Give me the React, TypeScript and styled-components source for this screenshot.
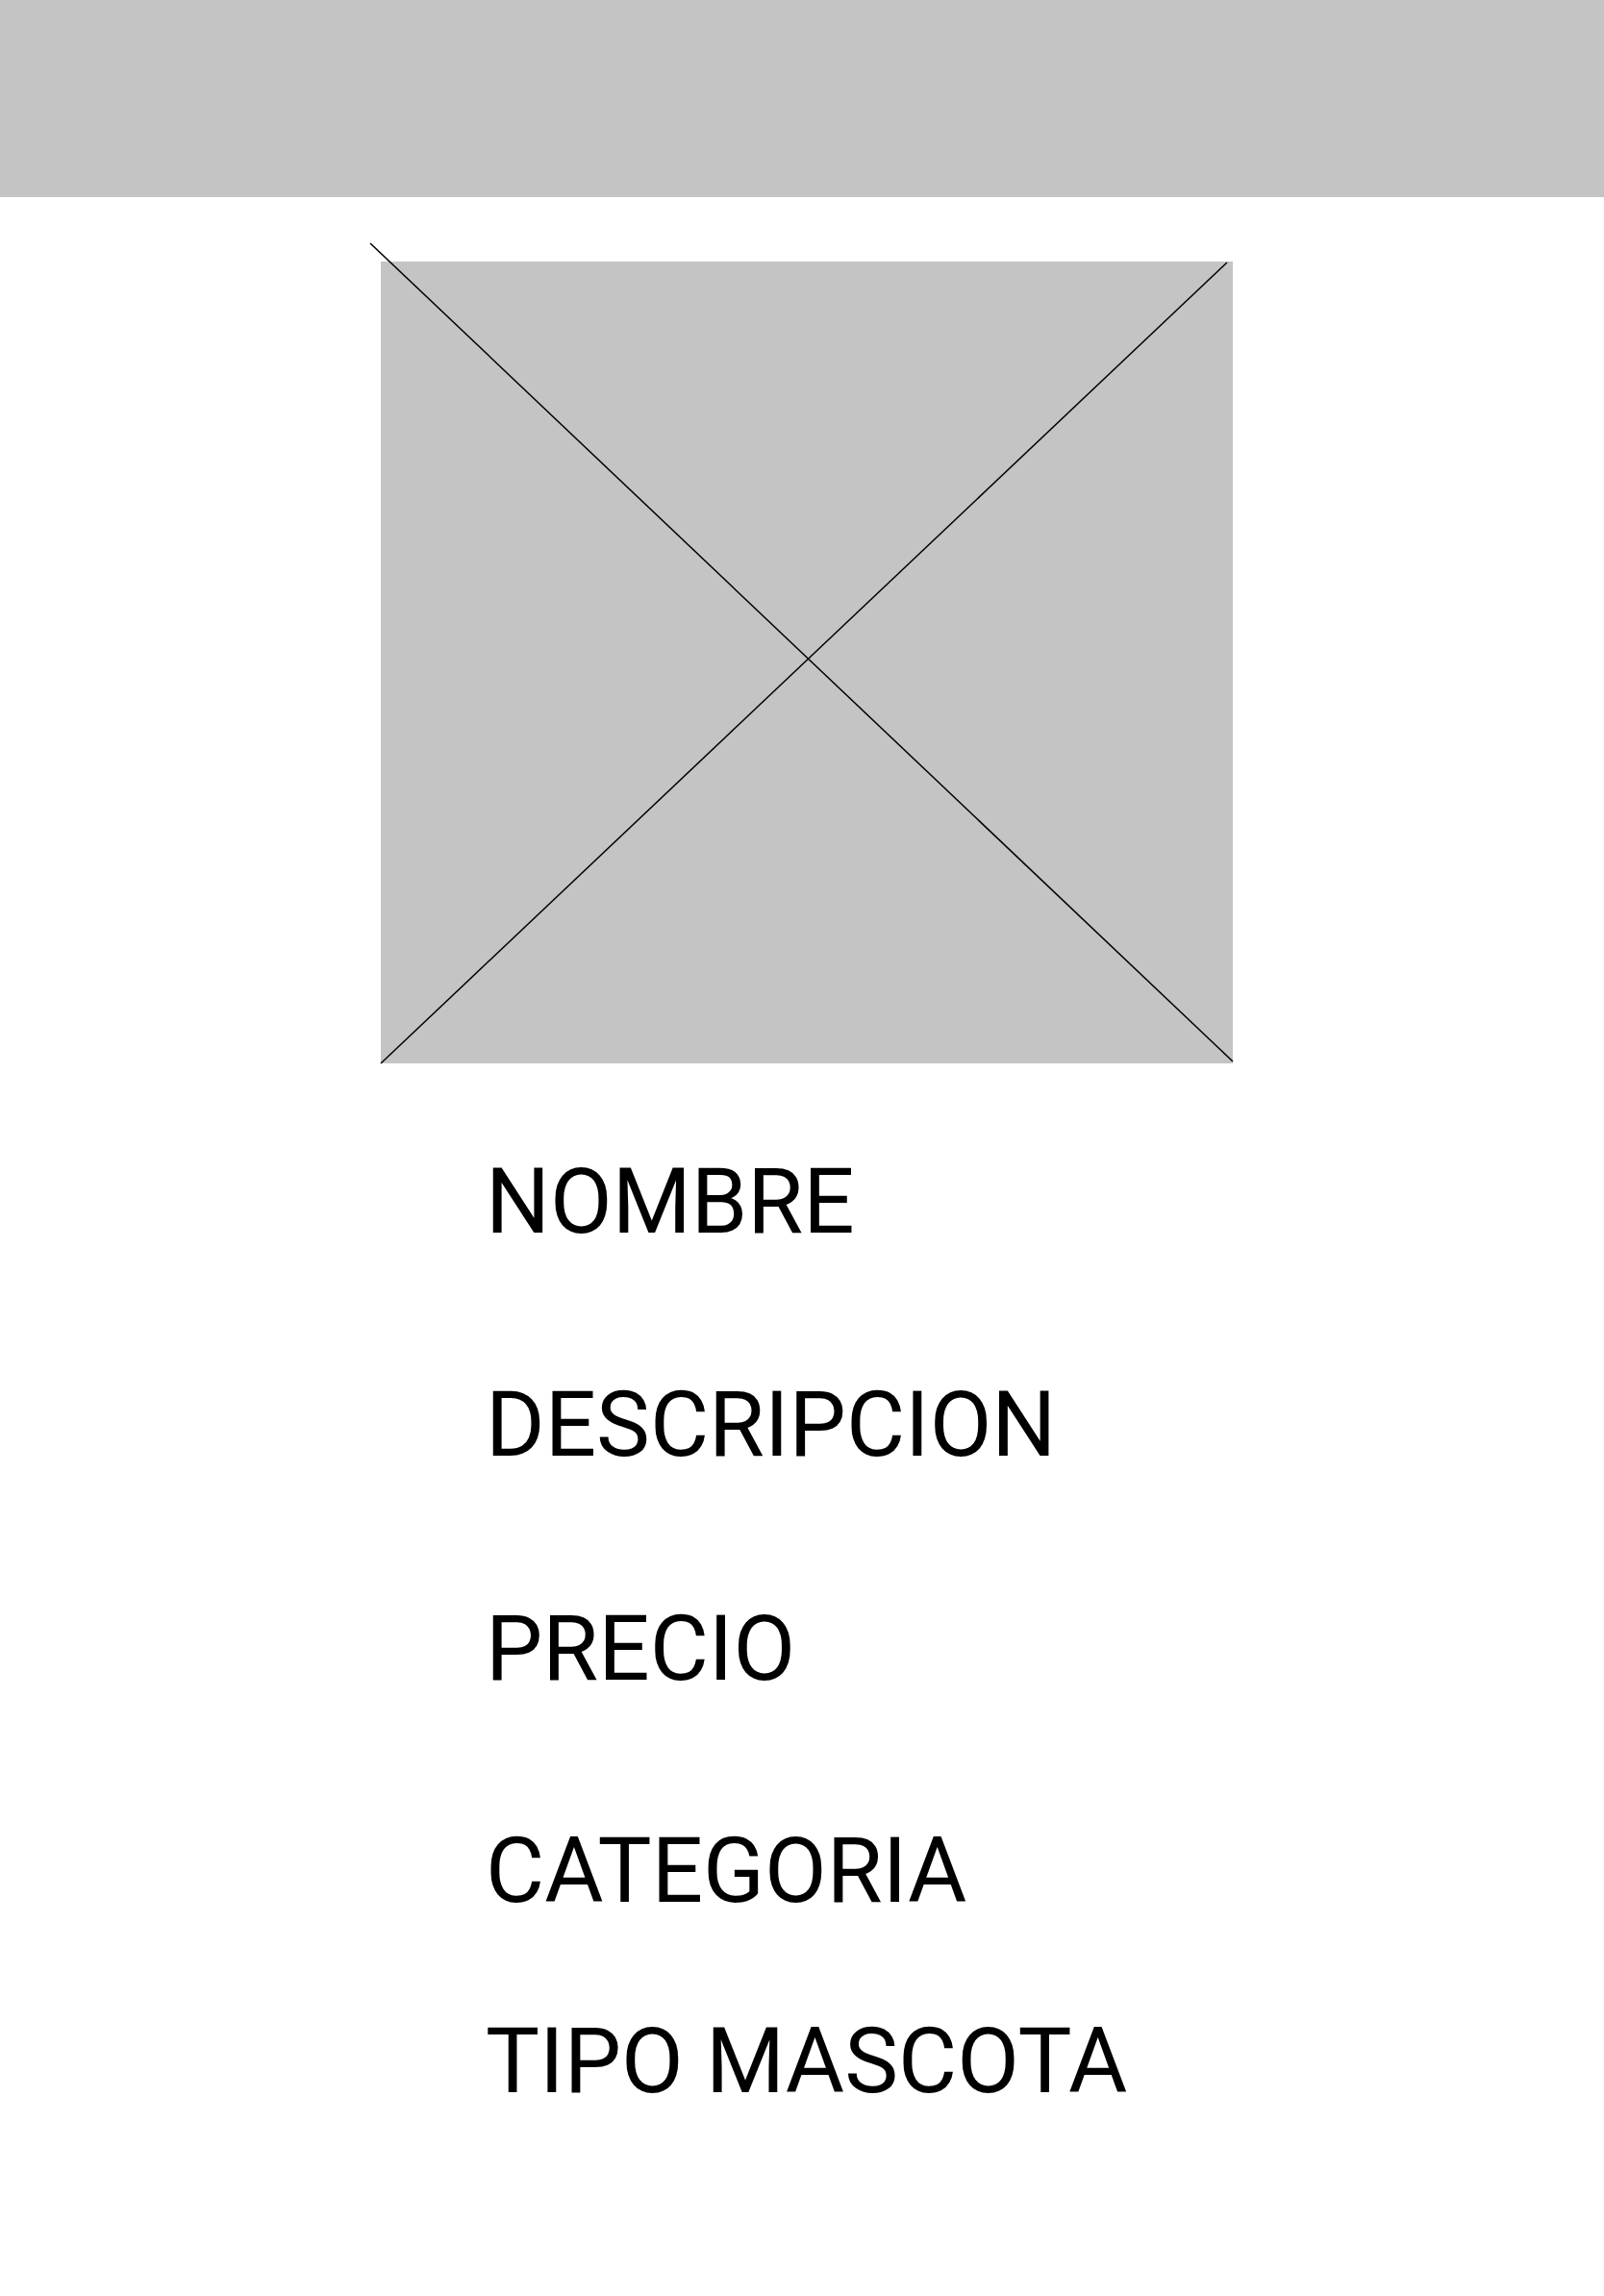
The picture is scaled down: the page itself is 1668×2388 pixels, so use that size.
import React from "react";
import styled, { createGlobalStyle } from "styled-components";

const GlobalStyle = createGlobalStyle`
  html, body {
    margin: 0;
    padding: 0;
    background: #ffffff;
  }
  body {
    font-family: Roboto, "Liberation Sans", Arial, sans-serif;
    color: #000000;
  }
`;

const Page = styled.div`
  width: 1668px;
  min-height: 2388px;
  display: flex;
  flex-direction: column;
  background: #ffffff;
`;

const Header = styled.header`
  height: 205px;
  width: 100%;
  background: #c4c4c4;
  flex-shrink: 0;
`;

const ImageSlot = styled.div`
  margin-top: 48px;
  margin-left: 385px;
  width: 897px;
  height: 853px;
  display: block;
`;

const Details = styled.ul`
  list-style: none;
  margin: 89px 0 0 505px;
  padding: 0;
  display: flex;
  flex-direction: column;
`;

const Field = styled.li<{ $space: number }>`
  margin-top: ${(p) => p.$space}px;
  font-family: Roboto, "Liberation Sans", Arial, sans-serif;
  font-size: 94px;
  line-height: 110px;
  height: 110px;
  font-weight: 400;
  color: #000000;
  white-space: nowrap;
`;

const fields = [
  { label: "NOMBRE", space: 0 },
  { label: "DESCRIPCION", space: 122 },
  { label: "PRECIO", space: 123 },
  { label: "CATEGORIA", space: 121 },
  { label: "TIPO MASCOTA", space: 88 },
];

function Placeholder() {
  return (
    <ImageSlot>
      <svg width="897" height="853" viewBox="0 0 897 853" style={{ overflow: "visible", display: "block" }}>
        <rect x="11" y="19" width="886" height="834" fill="#c4c4c4" />
        <line x1="0" y1="0" x2="897" y2="851" stroke="#000" strokeWidth="1.5" />
        <line x1="11" y1="853" x2="891" y2="20" stroke="#000" strokeWidth="1.5" />
      </svg>
    </ImageSlot>
  );
}

export default function App() {
  return (
    <>
      <GlobalStyle />
      <Page>
        <Header />
        <Placeholder />
        <Details>
          {fields.map((f) => (
            <Field key={f.label} $space={f.space}>
              {f.label}
            </Field>
          ))}
        </Details>
      </Page>
    </>
  );
}
